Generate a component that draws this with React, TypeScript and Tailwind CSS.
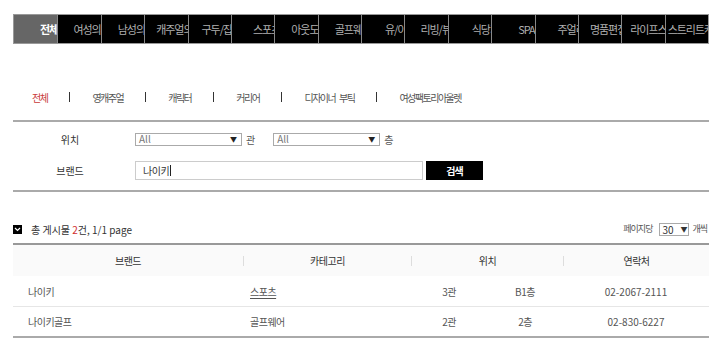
import React from "react"

const topMenu = [
  { label: "전체", pl: "pl-[26px]" },
  { label: "여성의류", pl: "pl-[15px]" },
  { label: "남성의류", pl: "pl-[16px]" },
  { label: "캐주얼의류", pl: "pl-[11px]" },
  { label: "구두/잡화", pl: "pl-[13px]" },
  { label: "스포츠", pl: "pl-[21px]" },
  { label: "아웃도어", pl: "pl-[16px]" },
  { label: "골프웨어", pl: "pl-[16px]" },
  { label: "유/아동", pl: "pl-[23px]" },
  { label: "리빙/뷰티", pl: "pl-[15px]" },
  { label: "식당가", pl: "pl-[23px]" },
  { label: "SPA", pl: "pl-[26px]" },
  { label: "주얼리", pl: "pl-[22px]" },
  { label: "명품편집", pl: "pl-[11px]" },
  { label: "라이프스타일", pl: "pl-[8px]" },
  { label: "스트리트캐주얼", pl: "pl-[2px]" },
]

const subMenu = ["전체", "영캐주얼", "캐릭터", "커리어", "디자이너 부틱", "여성팩토리아울렛"]

const rows = [
  { brand: "나이키", category: "스포츠", link: true, hall: "3관", floor: "B1층", tel: "02-2067-2111" },
  { brand: "나이키골프", category: "골프웨어", link: false, hall: "2관", floor: "2층", tel: "02-830-6227" },
]

function SelectBox({ value, className }: { value: string; className: string }) {
  return (
    <div className={`flex h-[13px] items-center justify-between border border-[#aaa] bg-white pl-[3px] pr-[4px] text-[10px] leading-none tracking-normal text-[#777] ${className}`}>
      <span>{value}</span>
      <span className="text-[7px] text-[#222]">▼</span>
    </div>
  )
}

export default function App() {
  return (
    <div className="h-[353px] w-[720px] overflow-hidden bg-white font-['Noto_Sans_CJK_KR','Noto_Sans',sans-serif] text-[10px] tracking-[-1px] text-[#444]">
      <div className="ml-[13px] w-[696px] pt-[14px]">
        {/* 상단 카테고리 */}
        <div className="grid h-[30px] grid-cols-16 border border-[#999] bg-black">
          {topMenu.map((m, i) => (
            <div
              key={m.label}
              className={`flex items-center overflow-hidden whitespace-nowrap text-[11px] ${m.pl} ${i === 0 ? "bg-[#666] font-bold text-white" : "border-l border-[#888] text-[#b0b0b0]"}`}
            >
              {m.label}
            </div>
          ))}
        </div>

        {/* 하위 카테고리 */}
        <div className="mt-[46px] flex h-[14px] items-center pl-[19px] tracking-[-1.5px] [word-spacing:3px] text-[#555]">
          {subMenu.map((s, i) => (
            <React.Fragment key={s}>
              {i > 0 && <span className="mx-[22px] h-[10px] w-px bg-[#333]" />}
              <span className={i === 0 ? "text-[#c83a3a]" : ""}>{s}</span>
            </React.Fragment>
          ))}
        </div>

        {/* 검색 폼 */}
        <div className="mt-[16px] h-[2px] bg-[#aaa]" />
        <div className="flex h-[32px] items-center pt-[2px]">
          <div className="w-[114px] text-center tracking-normal text-[#333]">위치</div>
          <div className="ml-[8px] flex items-center">
            <SelectBox value="All" className="w-[107px]" />
            <span className="ml-[4px] text-[#555]">관</span>
            <SelectBox value="All" className="ml-[19px] w-[107px]" />
            <span className="ml-[4px] text-[#555]">층</span>
          </div>
        </div>
        <div className="flex h-[36px] items-center pb-[3px]">
          <div className="w-[114px] text-center tracking-normal text-[#333]">브랜드</div>
          <div className="ml-[8px] flex h-[19px] w-[288px] items-center border border-[#ccc] pl-[7px] tracking-[-0.5px] text-[#333]">
            나이키<span className="ml-[1px] h-[11px] w-px bg-[#222]" />
          </div>
          <div className="ml-[3px] flex h-[19px] w-[57px] items-center justify-center bg-black font-bold text-white">검색</div>
        </div>
        <div className="h-[2px] bg-[#aaa]" />

        {/* 게시물 수 */}
        <div className="mt-[30px] flex h-[14px] items-center">
          <span className="flex h-[9px] w-[9px] items-center justify-center bg-black">
            <svg width="7" height="5" viewBox="0 0 7 5">
              <path d="M1 1 L3.5 3.5 L6 1" stroke="white" strokeWidth="1.2" fill="none" />
            </svg>
          </span>
          <span className="ml-[9px] tracking-normal text-[#333]">
            총 게시물 <span className="text-[#d03030]">2</span>건, 1/1 page
          </span>
          <div className="ml-auto mr-[2px] flex items-center text-[9px] text-[#555]">
            <span>페이지당</span>
            <div className="ml-[7px] flex h-[13px] w-[30px] items-center justify-between border border-[#aaa] px-[2px] text-[10px] text-[#333]">
              <span className="tracking-normal">30</span>
              <span className="text-[7px]">▼</span>
            </div>
            <span className="ml-[3px]">개씩</span>
          </div>
        </div>

        {/* 목록 */}
        <div className="mt-[7px] border-t-2 border-[#999] tracking-[-0.5px]">
          <div className="flex h-[31px] items-center bg-[#fafafa] text-[#333]">
            <div className="w-[230px] text-center">브랜드</div>
            <div className="h-[10px] w-px bg-[#ddd]" />
            <div className="w-[167px] text-center">카테고리</div>
            <div className="h-[10px] w-px bg-[#ddd]" />
            <div className="w-[151px] text-center">위치</div>
            <div className="h-[10px] w-px bg-[#ddd]" />
            <div className="flex-1 text-center">연락처</div>
          </div>
          {rows.map((r, i) => (
            <div key={r.brand} className={`flex h-[30px] items-center text-[#555] ${i > 0 ? "border-t border-[#e6e6e6]" : ""}`}>
              <div className="w-[230px] pl-[15px]">{r.brand}</div>
              <div className="w-[168px] pl-[7px]">
                <span className={r.link ? "underline underline-offset-2" : ""}>{r.category}</span>
              </div>
              <div className="w-[76px] text-center">{r.hall}</div>
              <div className="w-[76px] text-center">{r.floor}</div>
              <div className="flex-1 text-center tracking-normal">{r.tel}</div>
            </div>
          ))}
          <div className="h-[2px] bg-[#aaa]" />
        </div>
      </div>
    </div>
  )
}
